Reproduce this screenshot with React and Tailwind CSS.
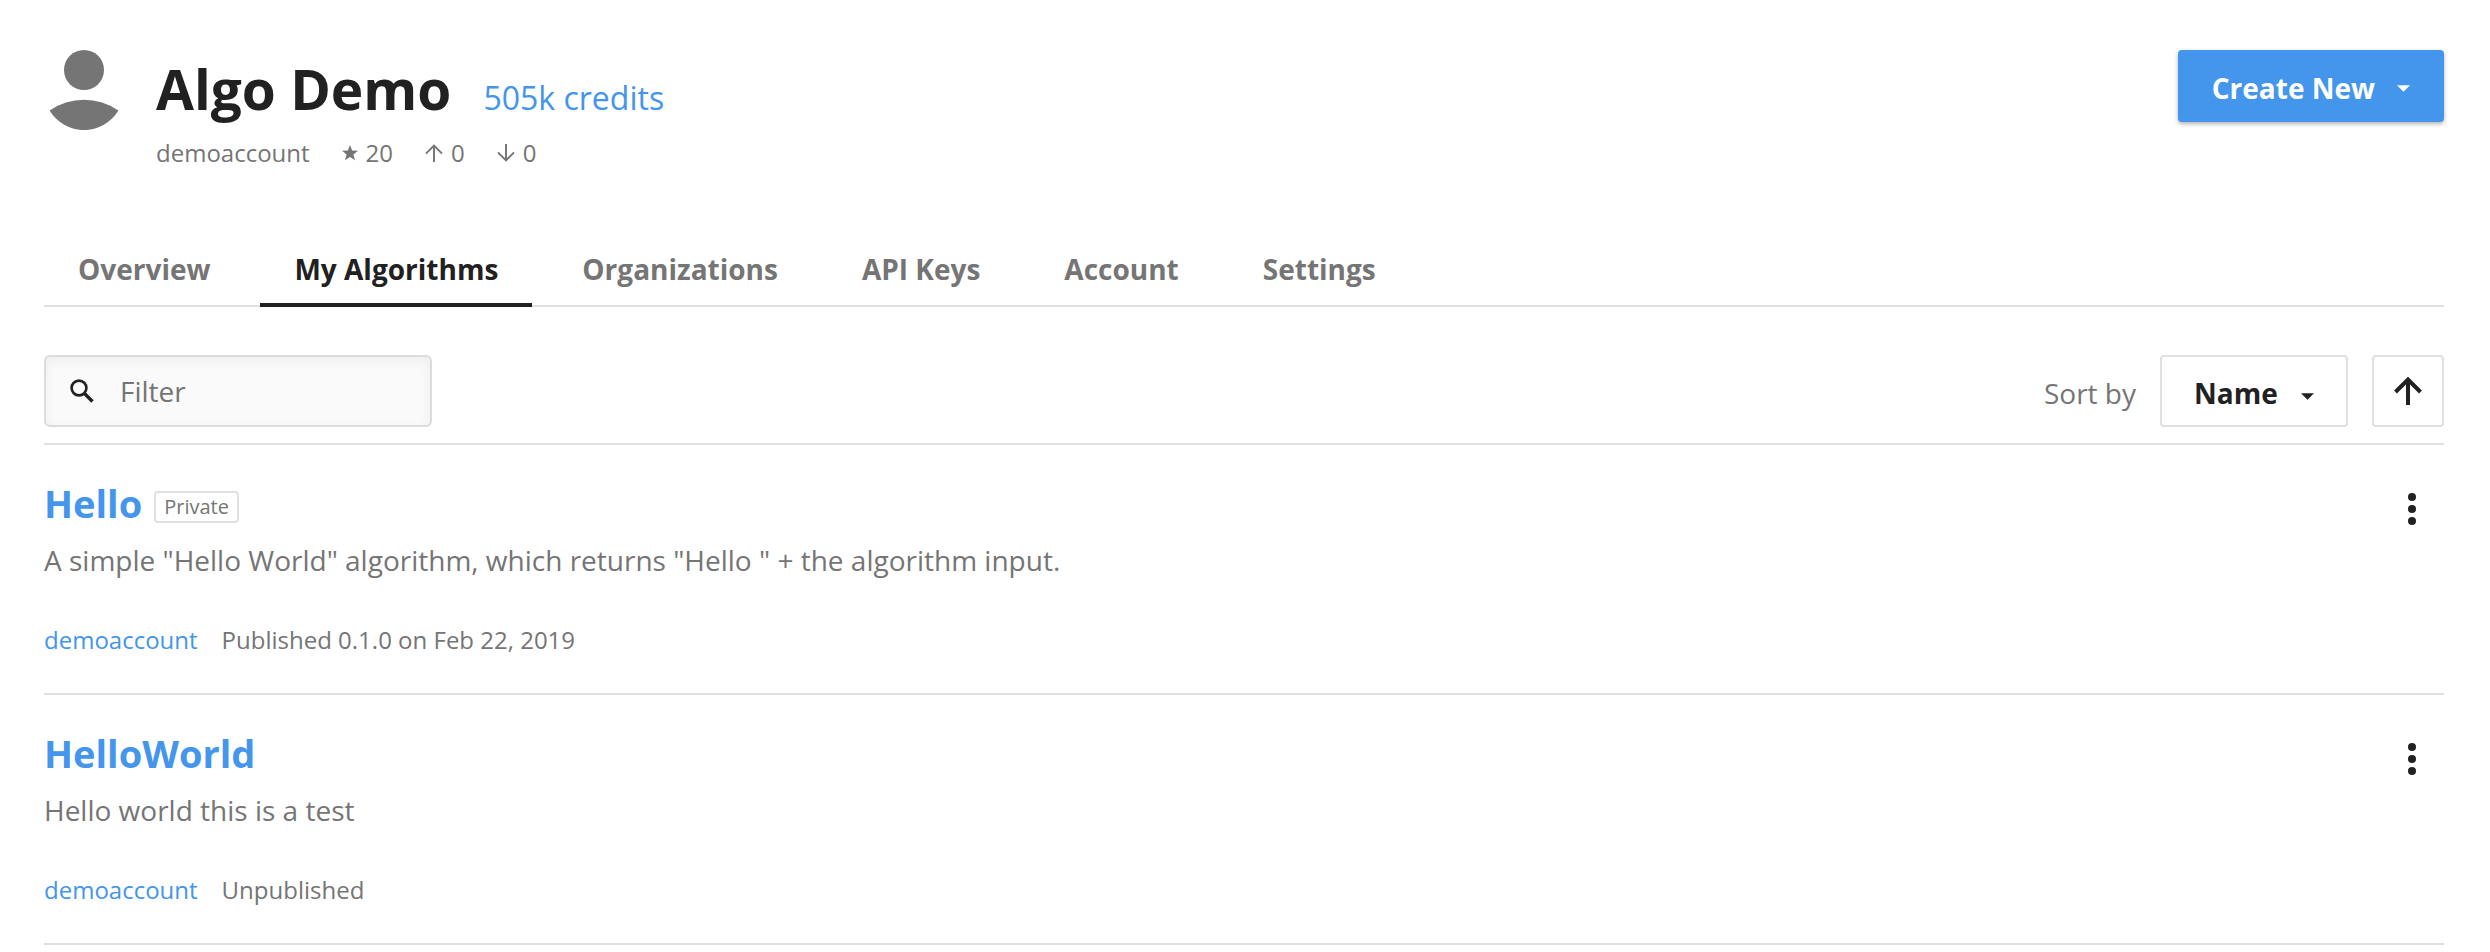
const TABS = ['Overview', 'My Algorithms', 'Organizations', 'API Keys', 'Account', 'Settings'];

const ALGORITHMS = [
  {
    name: 'Hello',
    isPrivate: true,
    description: 'A simple "Hello World" algorithm, which returns "Hello " + the algorithm input.',
    owner: 'demoaccount',
    status: 'Published 0.1.0 on Feb 22, 2019',
  },
  {
    name: 'HelloWorld',
    isPrivate: false,
    description: 'Hello world this is a test',
    owner: 'demoaccount',
    status: 'Unpublished',
  },
];

function Avatar() {
  return (
    <svg viewBox="0 0 80 80" className="size-20 shrink-0 fill-[#757575]" role="img" aria-label="Avatar">
      <circle cx="40" cy="20" r="20" />
      <path d="M5.6 60.5A60 60 0 0 1 74.4 60.5A40 40 0 0 1 5.6 60.5Z" />
    </svg>
  );
}

function Star() {
  return (
    <svg viewBox="0 0 16 16" className="size-4 fill-current" aria-hidden="true">
      <path d="M8 0L10.1 5.6L16 5.8L11.4 9.5L13 15.3L8 12L3 15.3L4.6 9.5L0 5.8L5.9 5.6Z" />
    </svg>
  );
}

function Arrow({ className, strokeWidth = 4 }) {
  return (
    <svg viewBox="0 0 28 28" className={className} fill="none" stroke="currentColor" strokeWidth={strokeWidth} aria-hidden="true">
      <path d="M14 28V3M1.5 15L14 2.5L26.5 15" />
    </svg>
  );
}

function Caret({ className }) {
  return (
    <svg viewBox="0 0 12 6" className={className} aria-hidden="true">
      <path d="M0 0H12L6 6Z" fill="currentColor" />
    </svg>
  );
}

function Header() {
  return (
    <header className="flex items-start justify-between">
      <div className="flex items-start gap-8">
        <Avatar />
        <div>
          <div className="flex items-baseline gap-8">
            <h1 className="text-[55px] leading-[77px] font-bold text-[#212121]">Algo Demo</h1>
            <a href="#credits" className="text-[32px] leading-10 text-[#4495ec]">505k credits</a>
          </div>
          <div className="mt-2 flex items-center gap-8 text-2xl leading-9">
            <span>demoaccount</span>
            <span className="flex items-center gap-2"><Star />20</span>
            <span className="flex items-center gap-2"><Arrow className="size-[18px]" strokeWidth={3} />0</span>
            <span className="flex items-center gap-2"><Arrow className="size-[18px] rotate-180" strokeWidth={3} />0</span>
          </div>
        </div>
      </div>
      <button type="button" className="flex h-[72px] items-center gap-[22px] rounded-sm bg-[#4495ec] px-[34px] pt-1 text-[28px] font-bold text-white shadow-[0_2px_4px_rgba(0,0,0,0.3)]">
        Create New
        <Caret className="h-[7px] w-[13px]" />
      </button>
    </header>
  );
}

function Tabs() {
  return (
    <nav className="mt-[78px] flex gap-4 shadow-[inset_0_-2px_0_#e0e0e0]">
      {TABS.map((tab) => (
        <a
          key={tab}
          href="#tab"
          aria-current={tab === 'My Algorithms' ? 'page' : undefined}
          className="border-b-4 border-transparent px-[34px] pb-[14px] text-[28px] leading-10 font-bold aria-[current=page]:border-[#212121] aria-[current=page]:text-[#212121]"
        >
          {tab}
        </a>
      ))}
    </nav>
  );
}

function Toolbar() {
  return (
    <div className="mt-12 flex items-center justify-between border-b-2 border-[#e0e0e0] pb-4 text-[28px]">
      <label className="flex h-[72px] w-[388px] items-center gap-[26px] rounded-md border-2 border-[#dcdcdc] bg-[#fafafa] px-6 shadow-[inset_0_4px_12px_rgba(0,0,0,0.05)]">
        <svg viewBox="0 0 24 24" className="size-6 shrink-0 text-[#212121]" fill="none" stroke="currentColor" strokeWidth="2.6" aria-hidden="true">
          <circle cx="9" cy="9" r="7.4" />
          <path d="M14.5 14.5L22.5 22.5" strokeWidth="3.4" />
        </svg>
        <input type="text" aria-label="Filter" placeholder="Filter" className="w-full min-w-0 bg-transparent outline-none placeholder:text-[#757575]" />
      </label>
      <div className="flex items-center gap-6">
        <label htmlFor="sort" className="pt-1">Sort by</label>
        <div className="relative">
          <select id="sort" className="block h-[72px] w-[188px] appearance-none rounded-sm border-2 border-[#e0e0e0] bg-white pt-1 pl-8 font-bold text-[#212121]">
            <option>Name</option>
            <option>Date</option>
          </select>
          <Caret className="pointer-events-none absolute top-[38px] right-[34px] h-[7px] w-[13px] text-[#212121]" />
        </div>
        <button type="button" aria-label="Sort ascending" className="flex size-[72px] items-center justify-center rounded-sm border-2 border-[#e0e0e0] text-[#212121]">
          <Arrow className="size-7" />
        </button>
      </div>
    </div>
  );
}

function AlgorithmRow({ item }) {
  return (
    <li className="flex items-start justify-between border-b-2 border-[#e0e0e0] pt-8 pb-[35px]">
      <div>
        <div className="flex items-center gap-3">
          <h2 className="text-[38px] leading-[52px] font-bold">
            <a href="#algorithm" className="text-[#4495ec]">{item.name}</a>
          </h2>
          {item.isPrivate && (
            <span className="mt-2 rounded-sm border-2 border-[#e0e0e0] px-2 text-xl leading-7">Private</span>
          )}
        </div>
        <p className="mt-[11px] text-[28px] leading-10">{item.description}</p>
        <div className="mt-[42px] flex gap-6 text-2xl leading-9">
          <a href="#owner" className="text-[#4495ec]">{item.owner}</a>
          <span>{item.status}</span>
        </div>
      </div>
      <button type="button" aria-label={`Actions for ${item.name}`} className="flex h-16 w-16 items-center justify-center">
        <svg viewBox="0 0 8 32" className="h-8 w-2 fill-[#212121]" aria-hidden="true">
          <circle cx="4" cy="4" r="4" />
          <circle cx="4" cy="16" r="4" />
          <circle cx="4" cy="28" r="4" />
        </svg>
      </button>
    </li>
  );
}

export default function App() {
  return (
    <main className="bg-white pt-[50px] pr-[46px] pl-11 font-['Open_Sans',sans-serif] text-[#757575]">
      <Header />
      <Tabs />
      <Toolbar />
      <ul>
        {ALGORITHMS.map((item) => (
          <AlgorithmRow key={item.name} item={item} />
        ))}
      </ul>
    </main>
  );
}
